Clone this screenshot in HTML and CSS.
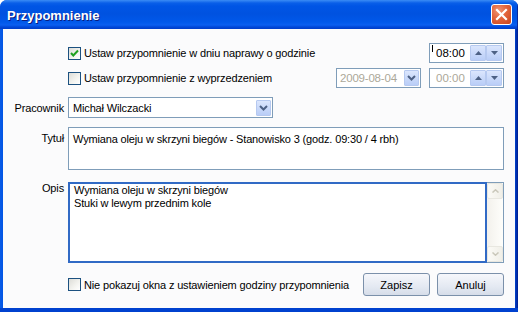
FILE: index.html
```html
<!DOCTYPE html>
<html>
<head>
<meta charset="utf-8">
<link rel="stylesheet" href="styles.css">
</head>
<body>
<div class="window">
  <div class="titlebar">
    <span class="title">Przypomnienie</span>
    <span class="close"><svg width="13" height="13" viewBox="0 0 13 13"><path d="M2 2 L11 11 M11 2 L2 11" stroke="#fff" stroke-width="2.2" stroke-linecap="square"/></svg></span>
  </div>
  <div class="frame">
    <div class="content">
      <div class="row row1">
        <label class="check"><span class="box checked"><svg width="11" height="11" viewBox="0 0 11 11"><path d="M2 5 L4.3 7.5 L9 2.5" fill="none" stroke="#21a121" stroke-width="2"/></svg></span>Ustaw przypomnienie w dniu naprawy o godzinie</label>
        <div class="spacer"></div>
        <div class="time"><span class="caret"></span><span class="val">08:00</span>
          <span class="spin up"><svg width="7" height="4" viewBox="0 0 7 4"><path d="M0 4 L3.5 0 L7 4Z" fill="#4d6185"/></svg></span><span class="spin dn"><svg width="7" height="4" viewBox="0 0 7 4"><path d="M0 0 L3.5 4 L7 0Z" fill="#4d6185"/></svg></span>
        </div>
      </div>
      <div class="row row2">
        <label class="check"><span class="box"></span>Ustaw przypomnienie z wyprzedzeniem</label>
        <div class="spacer"></div>
        <div class="combo date disabled"><span class="val">2009-08-04</span><span class="drop"><svg width="9" height="6" viewBox="0 0 9 6"><path d="M1 1 L4.5 4.5 L8 1" fill="none" stroke="#4d6185" stroke-width="2"/></svg></span></div>
        <div class="time disabled"><span class="val">00:00</span>
          <span class="spin up"><svg width="7" height="4" viewBox="0 0 7 4"><path d="M0 4 L3.5 0 L7 4Z" fill="#4d6185"/></svg></span><span class="spin dn"><svg width="7" height="4" viewBox="0 0 7 4"><path d="M0 0 L3.5 4 L7 0Z" fill="#4d6185"/></svg></span>
        </div>
      </div>
      <div class="grid">
        <span class="lbl lbl-mid">Pracownik</span>
        <div class="combo worker"><span class="val">Michał Wilczacki</span><span class="drop"><svg width="9" height="6" viewBox="0 0 9 6"><path d="M1 1 L4.5 4.5 L8 1" fill="none" stroke="#4d6185" stroke-width="2"/></svg></span></div>
        <span class="lbl t1">Tytuł</span>
        <div class="textbox title-box">Wymiana oleju w skrzyni biegów - Stanowisko 3 (godz. 09:30 / 4 rbh)</div>
        <span class="lbl t2">Opis</span>
        <div class="memo">
          <div class="memo-text">Wymiana oleju w skrzyni biegów<br>Stuki w lewym przednim kole</div>
          <div class="scroll">
            <span class="sbtn"><svg width="7" height="4" viewBox="0 0 7 4"><path d="M0.5 3.5 L3.5 0.8 L6.5 3.5" fill="none" stroke="#c9c7ba" stroke-width="1.5"/></svg></span>
            <span class="track"></span>
            <span class="sbtn"><svg width="7" height="4" viewBox="0 0 7 4"><path d="M0.5 0.5 L3.5 3.2 L6.5 0.5" fill="none" stroke="#c9c7ba" stroke-width="1.5"/></svg></span>
          </div>
        </div>
      </div>
      <div class="row row6">
        <label class="check"><span class="box"></span>Nie pokazuj okna z ustawieniem godziny przypomnienia</label>
        <div class="spacer"></div>
        <button class="btn">Zapisz</button>
        <button class="btn">Anuluj</button>
      </div>
    </div>
  </div>
</div>
</body>
</html>
```

FILE: styles.css
```css
html, body {
  margin: 0;
  padding: 0;
  background: #ffffff;
}
body {
  font-family: "Liberation Sans", Arial, sans-serif;
  font-size: 11px;
  letter-spacing: -0.15px;
  color: #000;
}
.window {
  width: 518px;
  height: 312px;
  display: flex;
  flex-direction: column;
  border-radius: 7px 7px 0 0;
  overflow: hidden;
  background: #0055e5;
}
.titlebar {
  height: 29px;
  flex: none;
  display: flex;
  align-items: center;
  justify-content: space-between;
  padding: 0 6px 0 7px;
  background: linear-gradient(to bottom, #3b8cf5 0px, #0a5fe8 3px, #0055e5 6px, #0052e0 14px, #0058ea 22px, #0a5ff0 25px, #0048d8 27px, #003dc8 29px);
  box-shadow: inset -1px 0 0 #0a2a9b;
}
.title {
  color: #fff;
  font-family: "Liberation Sans", Arial, sans-serif;
  font-weight: bold;
  font-size: 13px;
  letter-spacing: 0;
  text-shadow: 1px 1px 0 #0a1c7e;
  margin-top: 1px;
}
.close {
  width: 19px;
  height: 19px;
  border: 1px solid #fff;
  border-radius: 3px;
  background: radial-gradient(circle at 35% 30%, #f09473 0%, #e2643b 45%, #c9441d 100%);
  display: flex;
  align-items: center;
  justify-content: center;
}
.frame {
  flex: 1;
  display: flex;
  padding: 0 3px 4px 3px;
  background: linear-gradient(to right, #0a5be6 0px, #0055e5 3px, #0055e5 514px, #0034b8 516px, #001c8c 518px);
  box-shadow: inset 0 -4px 0 #0041cf;
}
.content {
  flex: 1;
  background: #fbfbfc;
  display: flex;
  flex-direction: column;
}
.row {
  display: flex;
  align-items: center;
  margin-left: 65px;
  margin-right: 11px;
}
.spacer { flex: 1; }
.row1 { margin-top: 14px; height: 20px; }
.row2 { margin-top: 5px; height: 20px; }
.row6 { margin-top: 10px; height: 23px; }
.check {
  display: flex;
  align-items: center;
  white-space: nowrap;
}
.box {
  flex: none;
  width: 11px;
  height: 11px;
  border: 1px solid #1c5180;
  background: linear-gradient(135deg, #dcdcd7 0%, #f4f4f0 60%, #ffffff 100%);
  margin-right: 3px;
  display: flex;
  align-items: center;
  justify-content: center;
}
.time {
  flex: none;
  width: 73px;
  height: 18px;
  border: 1px solid #7f9db9;
  background: #fff;
  display: flex;
  align-items: center;
  position: relative;
}
.time .val {
  flex: 1;
  padding-left: 6px;
  font-size: 11.5px;
  letter-spacing: 0;
}
.caret {
  position: absolute;
  left: 2px;
  top: 1px;
  width: 1px;
  height: 7px;
  background: #000;
}
.disabled .val { color: #aca899; }
.spin {
  width: 14px;
  height: 14px;
  border: 1px solid #b6c9f0;
  border-radius: 1px;
  background: linear-gradient(to bottom, #dbe6fd, #b9cdf7);
  display: flex;
  align-items: center;
  justify-content: center;
}
.spin.dn { margin-right: 1px; }
.combo {
  flex: none;
  height: 18px;
  border: 1px solid #7f9db9;
  background: #fff;
  display: flex;
  align-items: center;
}
.combo .val {
  flex: 1;
  padding-left: 4px;
  white-space: nowrap;
}
.date { width: 83px; margin-right: 8px; }
.date .val { font-size: 11.5px; padding-left: 3px; letter-spacing: -0.2px; }
.drop {
  width: 15px;
  height: 16px;
  margin-right: 1px;
  border: 1px solid #b6c9f0;
  border-radius: 1px;
  background: linear-gradient(to bottom, #dbe6fd, #b9cdf7);
  display: flex;
  align-items: center;
  justify-content: center;
  box-sizing: border-box;
}
.grid {
  display: grid;
  grid-template-columns: 61px 436px;
  column-gap: 4px;
  margin-top: 9px;
}
.lbl {
  text-align: right;
  white-space: nowrap;
}
.lbl-mid { align-self: center; }
.worker { width: 203px; height: 19px; }
.t1 { margin-top: 9px; padding-top: 5px; line-height: 13px; }
.title-box {
  margin-top: 9px;
  height: 43px;
  box-sizing: border-box;
  border: 1px solid #7f9db9;
  background: #fff;
  padding: 5px 4px 0 4px;
  line-height: 13px;
}
.t2 { margin-top: 12px; padding-top: 0; line-height: 13px; }
.memo {
  margin-top: 12px;
  height: 81px;
  box-sizing: border-box;
  border: 1px solid #7f9db9;
  display: flex;
  background: #fff;
}
.memo-text {
  flex: 1;
  margin: -1px 0 -1px -1px;
  border: 2px solid #316ac5;
  padding: 0 4px;
  line-height: 13px;
}
.scroll {
  width: 16px;
  display: flex;
  flex-direction: column;
  background: linear-gradient(to right, #f3f1ec, #fefefb);
}
.sbtn {
  height: 16px;
  box-sizing: border-box;
  border: 1px solid #e8e7e0;
  border-radius: 2px;
  background: linear-gradient(to right, #fbfaf6, #f0efe8);
  display: flex;
  align-items: center;
  justify-content: center;
}
.track { flex: 1; }
.btn {
  flex: none;
  width: 67px;
  height: 23px;
  margin-left: 7px;
  border: 1px solid #7b90aa;
  border-radius: 3px;
  background: linear-gradient(to bottom, #f6f7fb 0%, #e4e9f2 60%, #d6dde9 100%);
  font-family: "Liberation Sans", Arial, sans-serif;
  font-size: 11px;
  letter-spacing: 0;
  color: #000;
  padding: 0;
}
```
